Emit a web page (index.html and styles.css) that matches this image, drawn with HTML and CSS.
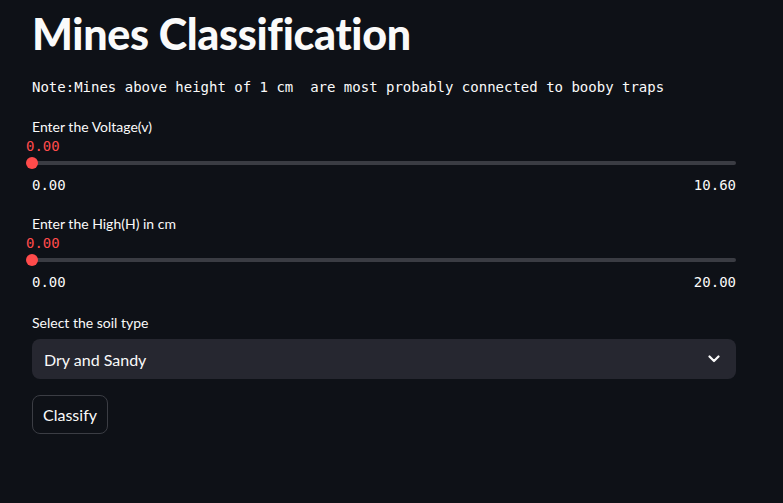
FILE: index.html
```html
<!DOCTYPE html>
<html>
<head>
<meta charset="utf-8">
<link rel="stylesheet" href="styles.css">
</head>
<body>
<main class="app">
  <h1 class="title">Mines Classification</h1>
  <p class="note">Note:Mines above height of 1 cm&nbsp; are most probably connected to booby traps</p>

  <div class="field slider-field">
    <label class="label">Enter the Voltage(v)</label>
    <div class="slider">
      <div class="track"></div>
      <div class="thumb"><span class="thumb-value">0.00</span></div>
    </div>
    <div class="ticks"><span>0.00</span><span>10.60</span></div>
  </div>

  <div class="field slider-field">
    <label class="label">Enter the High(H) in cm</label>
    <div class="slider">
      <div class="track"></div>
      <div class="thumb"><span class="thumb-value">0.00</span></div>
    </div>
    <div class="ticks"><span>0.00</span><span>20.00</span></div>
  </div>

  <div class="field select-field">
    <label class="label">Select the soil type</label>
    <div class="select">
      <span>Dry and Sandy</span>
      <svg class="chevron" width="12" height="8" viewBox="0 0 12 8"><path d="M1.5 1.5 L6 6 L10.5 1.5" fill="none" stroke="#fafafa" stroke-width="2.2" stroke-linecap="round" stroke-linejoin="round"/></svg>
    </div>
  </div>

  <div class="actions">
    <button class="btn">Classify</button>
  </div>
</main>
</body>
</html>
```
FILE: styles.css
```css
* { box-sizing: border-box; }
html, body {
  margin: 0;
  background: #0e1117;
  color: #fafafa;
  font-family: Lato, "Noto Sans", sans-serif;
}
.app {
  width: 704px;
  margin-left: 32px;
  padding-top: 6px;
  display: flex;
  flex-direction: column;
}
.title {
  margin: 0;
  font-size: 43px;
  font-weight: 900;
  line-height: 56px;
  letter-spacing: -0.3px;
}
.note {
  margin: 15px 0 0;
  font-family: "DejaVu Sans Mono", "Liberation Mono", monospace;
  font-size: 14px;
  line-height: 20px;
}
.field {
  display: flex;
  flex-direction: column;
}
.slider-field { margin-top: 21px; }
.slider-field + .slider-field { margin-top: 20px; }
.label {
  font-size: 14px;
  line-height: 18px;
  height: 18px;
}
.slider {
  position: relative;
  height: 39px;
}
.track {
  position: absolute;
  left: 0; right: 0;
  top: 25px;
  height: 4px;
  border-radius: 2px;
  background: #3a3c43;
}
.thumb {
  position: absolute;
  left: -6px;
  top: 21px;
  width: 12px;
  height: 12px;
  border-radius: 50%;
  background: #ff4b4b;
}
.thumb-value {
  position: absolute;
  left: 0;
  top: -21px;
  color: #ff4b4b;
  font-family: "DejaVu Sans Mono", "Liberation Mono", monospace;
  font-size: 14px;
  line-height: 20px;
}
.ticks {
  display: flex;
  justify-content: space-between;
  font-family: "DejaVu Sans Mono", "Liberation Mono", monospace;
  font-size: 14px;
  line-height: 20px;
}
.select-field { margin-top: 22px; }
.select {
  margin-top: 7px;
  height: 40px;
  border-radius: 8px;
  background: #262730;
  display: flex;
  align-items: center;
  justify-content: space-between;
  padding: 0 16px 0 12px;
  font-size: 16px;
}
.actions { margin-top: 16px; }
.btn {
  font-family: inherit;
  font-size: 16px;
  color: #fafafa;
  background: #0e1117;
  border: 1px solid #3b3d44;
  border-radius: 8px;
  height: 39px;
  width: 76px;
  padding: 0;
}
```
